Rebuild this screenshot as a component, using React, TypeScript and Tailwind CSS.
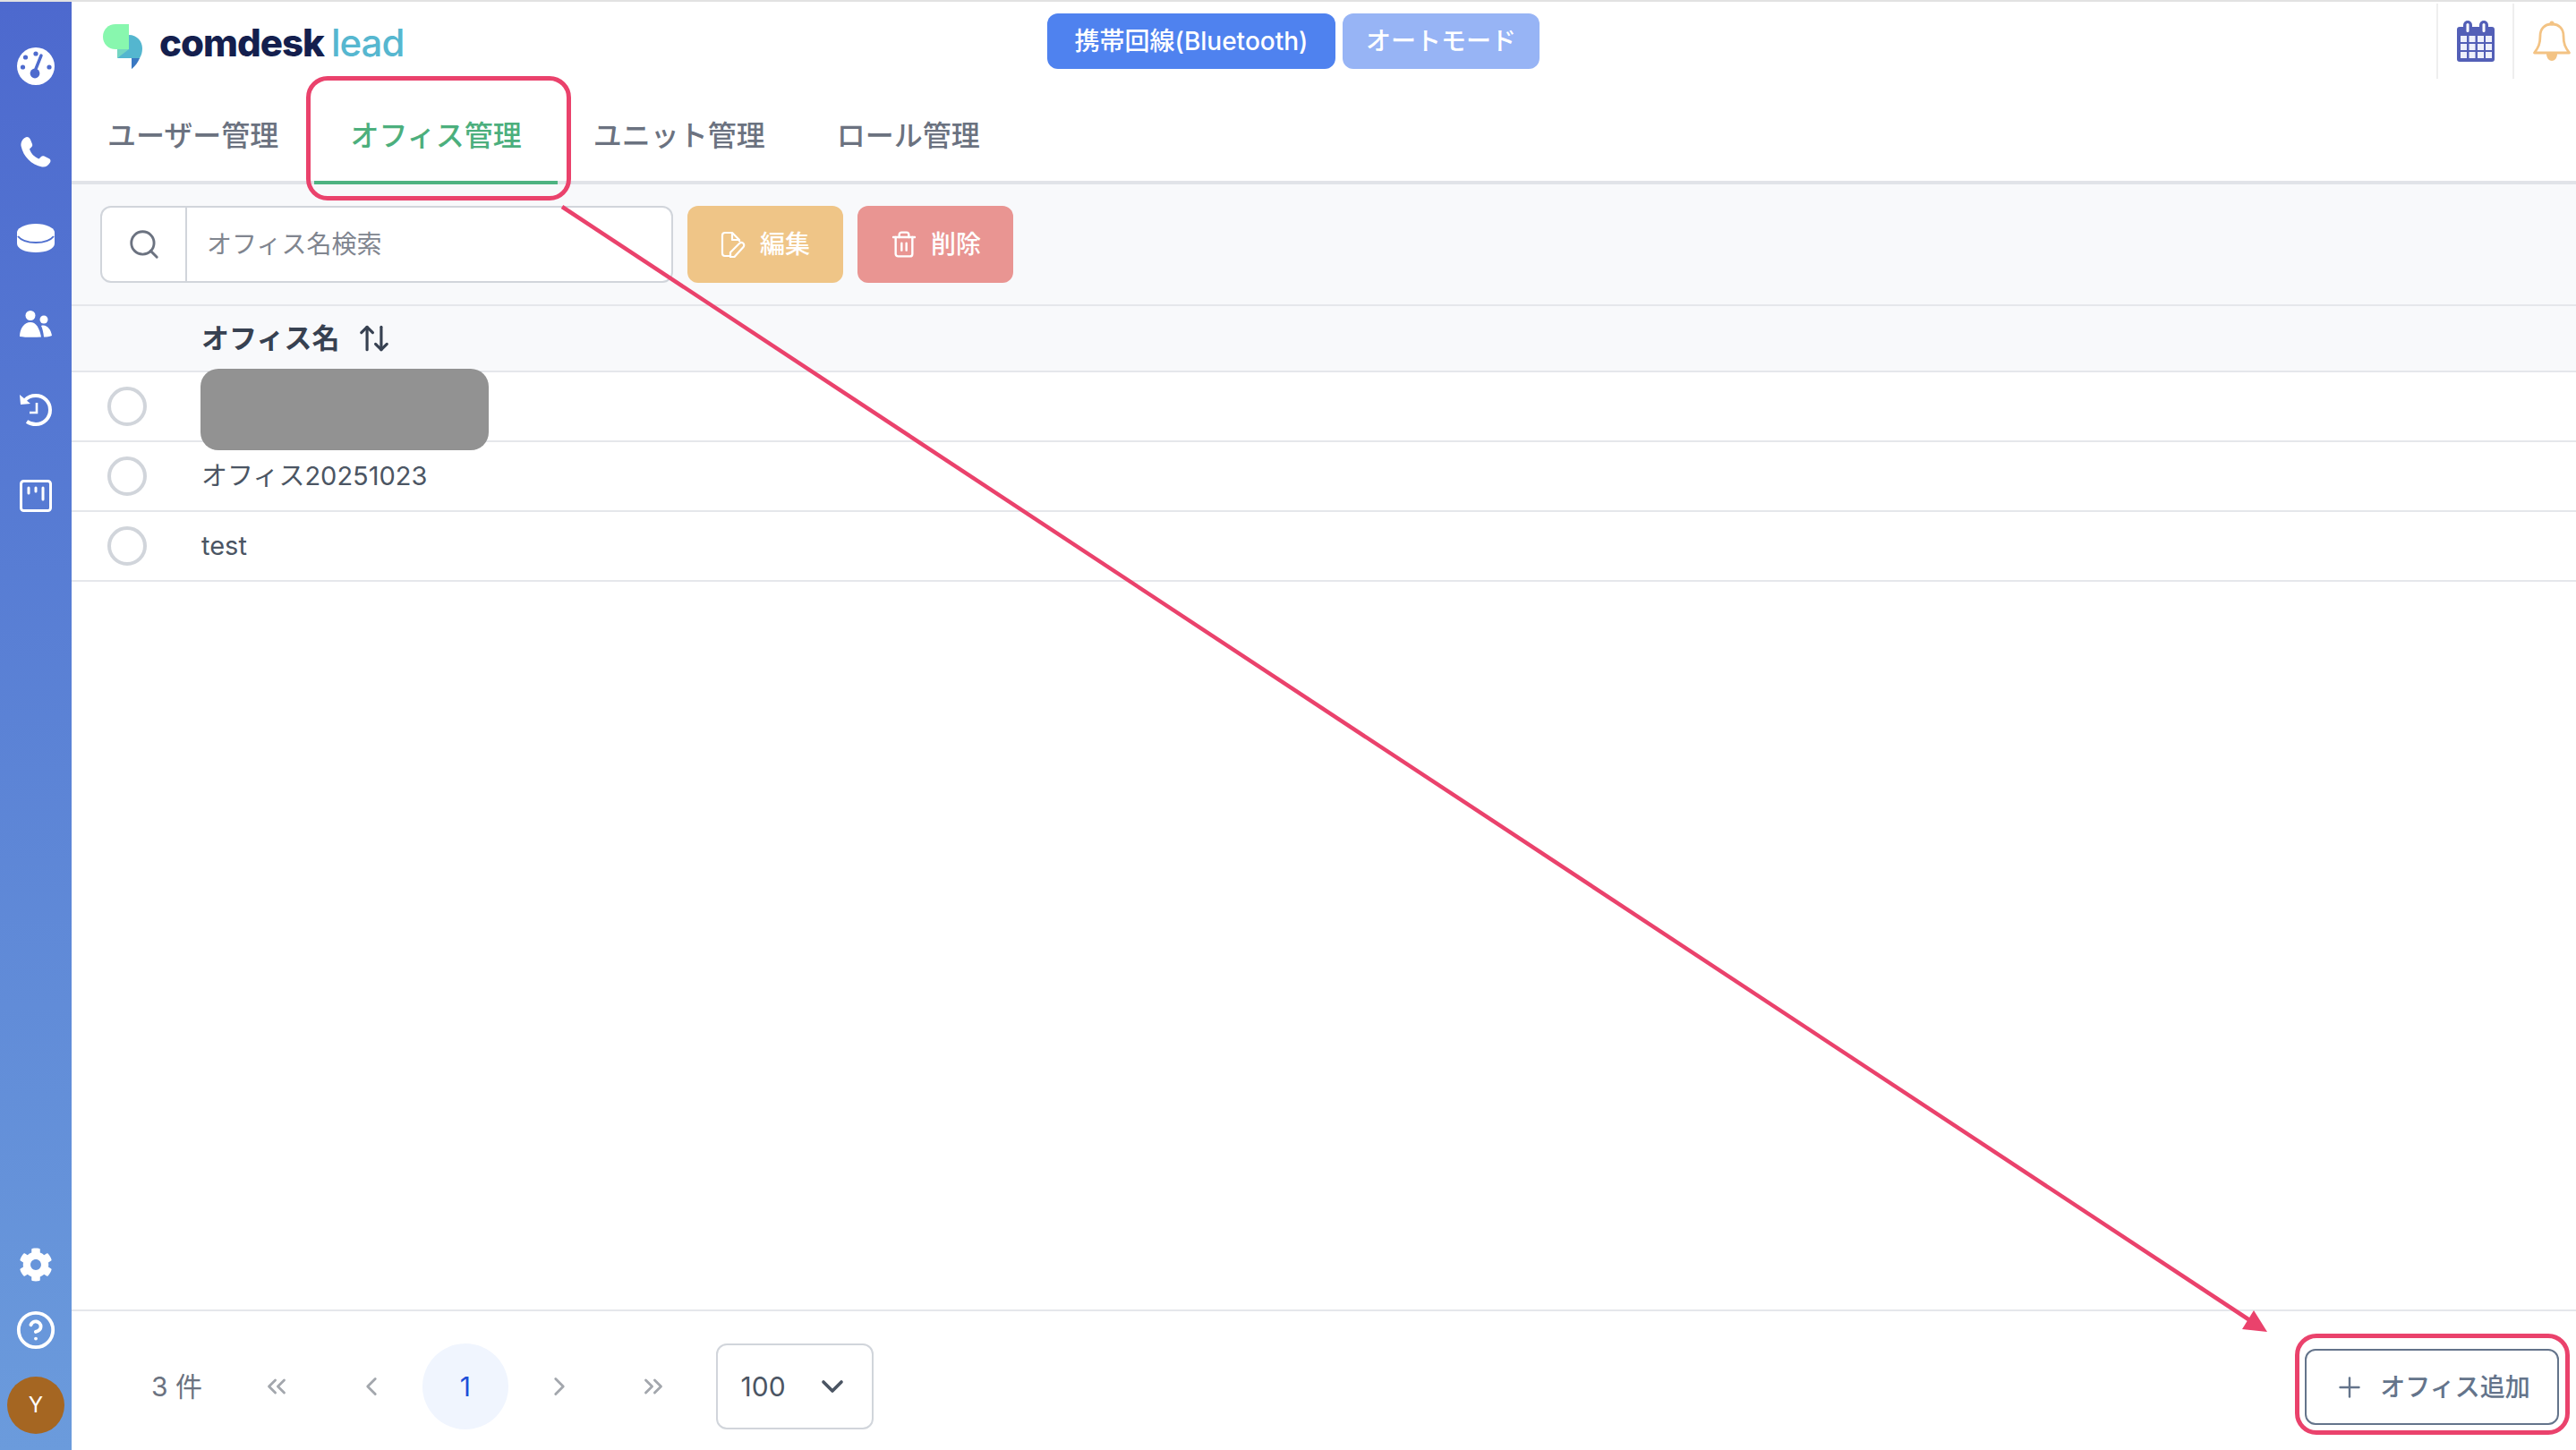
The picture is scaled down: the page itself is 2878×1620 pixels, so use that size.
import { ArrowUpDown, ChevronLeft, ChevronRight, ChevronDown, ChevronsLeft, ChevronsRight, CircleHelp, Plus, Search, Trash2 } from "lucide-react"
import { FaCog } from "react-icons/fa"

const tabs = [
  { label: "ユーザー管理", active: false },
  { label: "オフィス管理", active: true },
  { label: "ユニット管理", active: false },
  { label: "ロール管理", active: false },
]

const rows = ["", "オフィス20251023", "test"]

function Logo() {
  return (
    <svg width="46" height="52" viewBox="0 0 46 52">
      <path d="M29 12C38 12 44 19 44 27C44 31 43 35 41 38L32 50V38H16L29 24Z" fill="#54b6cf" />
      <path d="M16 27H29V24L16 38Z" fill="#74d6c2" />
      <path d="M14 0H29V28H14C6 28 0 22 0 14C0 6 6 0 14 0Z" fill="#88f7ae" />
      <path d="M16 28H29L16 38Z" fill="#74d6c2" />
      <path d="M32 38H41C39 43 36 47 32 50Z" fill="#3a78c2" />
    </svg>
  )
}

function GaugeIcon() {
  return (
    <svg width="42" height="42" viewBox="0 0 42 42">
      <circle cx="21" cy="21" r="21" fill="#fff" />
      <circle cx="21" cy="7" r="2.6" fill="#4e6bce" />
      <circle cx="9.5" cy="11" r="2.6" fill="#4e6bce" />
      <circle cx="6.5" cy="22" r="2.6" fill="#4e6bce" />
      <circle cx="36" cy="22" r="2.6" fill="#4e6bce" />
      <path d="M27 9L21 24" stroke="#4e6bce" strokeWidth="3.4" strokeLinecap="round" />
      <circle cx="20" cy="29" r="5.4" fill="#4e6bce" />
    </svg>
  )
}

function PhoneIcon() {
  return (
    <svg width="34" height="34" viewBox="0 0 34 34">
      <path
        d="M7 0C9 0 10 1 11 3L13 8C13.500 9.500 13 10.500 12 11.500L10 13.500C12 19 15 22 20.500 24.500L23 22C24 21 25 21 26.500 21.500L31.500 24C33.500 25 34 26.500 33 28.500C31 32 28 34 24 33.500C12 31 3 22 0.500 10C0 5 3 1 7 0Z"
        fill="#fff"
      />
    </svg>
  )
}

function DiskIcon() {
  return (
    <svg width="42" height="32" viewBox="0 0 42 32">
      <path d="M0 9V22C0 28 9 32 21 32C33 32 42 28 42 22V9Z" fill="#fff" />
      <ellipse cx="21" cy="10" rx="21" ry="10" fill="#fff" stroke="#5070cf" strokeWidth="0" />
      <path d="M1 14C5 19 12 21 21 21C30 21 37 19 41 14" fill="none" stroke="#5070cf" strokeWidth="2" />
    </svg>
  )
}

function UsersIcon() {
  return (
    <svg width="36" height="30" viewBox="0 0 36 30">
      <circle cx="12" cy="5.500" r="5.500" fill="#fff" />
      <circle cx="27" cy="10" r="4.500" fill="#fff" />
      <path d="M0 29C0 20 5 13 12 13C18 13 22 19 24 29.500C16 30 6 30 0 29Z" fill="#fff" />
      <path d="M24 17C30 15 35 21 36 28C33 29.500 30 29.500 27 29.500C26.500 25 25.500 20 24 17Z" fill="#fff" />
    </svg>
  )
}

function HistoryIcon() {
  return (
    <svg width="36" height="36" viewBox="0 0 36 36" fill="none">
      <path d="M6 7C9 3.500 13 2 18 2C27 2 34 9 34 18C34 27 27 34 18 34C14 34 11 33 8 31" stroke="#fff" strokeWidth="4" />
      <path d="M0 1L1 12L12 11Z" fill="#fff" />
      <path d="M19 10V21H11" stroke="#fff" strokeWidth="2.600" />
    </svg>
  )
}

function BoardIcon() {
  return (
    <svg width="36" height="36" viewBox="0 0 36 36" fill="none">
      <rect x="1.500" y="1.500" width="33" height="33" rx="3" stroke="#fff" strokeWidth="3" />
      <path d="M10 9V15M18 9V13M26 9V22" stroke="#fff" strokeWidth="3" strokeLinecap="round" />
    </svg>
  )
}

function CalendarIcon() {
  return (
    <svg width="42" height="46" viewBox="0 0 42 46">
      <rect x="0" y="7" width="42" height="39" rx="3" fill="#535fb7" />
      <rect x="7" y="0" width="10" height="16" rx="5" fill="#535fb7" />
      <rect x="25" y="0" width="10" height="16" rx="5" fill="#535fb7" />
      <rect x="10.500" y="3" width="3" height="10" rx="1.500" fill="#fff" />
      <rect x="28.500" y="3" width="3" height="10" rx="1.500" fill="#fff" />
      {[17, 26, 35].map((y) =>
        [4, 13.500, 23, 32].map((x) => (
          <rect key={`${x}-${y}`} x={x} y={y} width="7" height="7" fill="#eef0fb" />
        ))
      )}
    </svg>
  )
}

function BellIcon() {
  return (
    <svg width="42" height="46" viewBox="0 0 42 46" fill="none">
      <path
        d="M21 4C12 4 8 10 8 17C8 26 6 30 1.500 36H40.500C36 30 34 26 34 17C34 10 30 4 21 4Z"
        stroke="#f3c384"
        strokeWidth="2.800"
        strokeLinejoin="round"
      />
      <circle cx="21" cy="3" r="2.500" fill="#f3c384" />
      <path d="M15 37C15 42 18 45 21 45C24 45 27 42 27 37Z" fill="#f3c384" />
    </svg>
  )
}

function EditIcon() {
  return (
    <svg width="28" height="30" viewBox="0 0 28 30" fill="none" stroke="#fff" strokeWidth="2.200" strokeLinejoin="round">
      <path d="M11 28H5C3 28 2 27 2 25V5C2 3 3 2 5 2H13L21 10V12" />
      <path d="M13 2V10H21" />
      <path d="M11 29V24L21 14C22.500 12.500 24.500 12.500 25.500 14C26.500 15 26.500 17 25.500 18L15.500 29Z" />
    </svg>
  )
}

export default function App() {
  return (
    <div className="relative flex h-[1620px] w-[2878px] flex-col overflow-hidden bg-white font-[Inter,'Noto_Sans_CJK_JP',sans-serif]">
      <div className="h-[2px] bg-[#e2e2e2]" />
      <div className="flex min-h-0 flex-1">
        {/* Sidebar */}
        <aside className="flex w-[80px] flex-col items-center bg-gradient-to-b from-[#4d69ce] to-[#6b9bdc] pt-[24px] pb-[18px]">
          <div className="flex h-[96px] items-center justify-center"><GaugeIcon /></div>
          <div className="flex h-[96px] items-center justify-center"><PhoneIcon /></div>
          <div className="flex h-[96px] items-center justify-center"><DiskIcon /></div>
          <div className="flex h-[96px] items-center justify-center"><UsersIcon /></div>
          <div className="flex h-[96px] items-center justify-center"><HistoryIcon /></div>
          <div className="flex h-[96px] items-center justify-center"><BoardIcon /></div>
          <div className="mt-auto flex flex-col items-center">
            <FaCog className="h-[38px] w-[38px] text-white" />
            <CircleHelp className="mt-[31px] h-[46px] w-[46px] text-white" strokeWidth={2} />
            <div className="mt-[29px] flex h-[64px] w-[64px] items-center justify-center rounded-full bg-[#a56622] text-[24px] text-white">
              Y
            </div>
          </div>
        </aside>

        {/* Main */}
        <main className="flex min-w-0 flex-1 flex-col">
          {/* Header */}
          <header className="flex h-[88px] shrink-0">
            <div className="flex w-[1090px] items-start gap-[17px] pt-[25px] pl-[35px]">
              <Logo />
              <div className="flex h-[42px] items-baseline text-[42px] leading-[42px] tracking-[-1px]">
                <span className="font-extrabold text-[#141f4e]">comdesk</span>
                <span className="ml-[8px] font-medium text-[#56b7d0]">lead</span>
              </div>
            </div>
            <div className="flex gap-[8px] pt-[13px]">
              <button className="flex h-[62px] w-[322px] items-center justify-center rounded-[12px] bg-[#4f82ef] text-[28px] font-medium text-white">
                携帯回線(Bluetooth)
              </button>
              <button className="flex h-[62px] w-[220px] items-center justify-center rounded-[12px] bg-[#97b4f5] text-[28px] font-medium text-white">
                オートモード
              </button>
            </div>
            <div className="ml-auto flex h-[86px] pt-[2px]">
              <div className="flex w-[85px] items-center justify-center border-l-2 border-[#eeeeee]"><CalendarIcon /></div>
              <div className="flex w-[71px] items-center justify-start border-l-2 border-[#eeeeee] pl-[21px]"><BellIcon /></div>
            </div>
          </header>

          {/* Tabs */}
          <nav className="flex h-[116px] shrink-0 border-b-4 border-[#e1e3e8]">
            {tabs.map((tab) => (
              <div
                key={tab.label}
                className={
                  tab.active
                    ? "-mb-[4px] flex h-[116px] items-start border-b-4 border-[#4db381] px-[40px] pt-[38px] text-[32px] font-medium text-[#4caf7d]"
                    : "flex items-start px-[40px] pt-[38px] text-[32px] font-medium text-[#6b7280]"
                }
              >
                {tab.label}
              </div>
            ))}
          </nav>

          {/* Toolbar */}
          <div className="flex h-[136px] shrink-0 items-start gap-[16px] border-b-2 border-[#e5e7eb] bg-[#f8f9fb] pt-[24px] pl-[32px]">
            <div className="flex h-[86px] w-[640px] items-stretch overflow-hidden rounded-[12px] border-2 border-[#d1d5db] bg-white">
              <div className="flex w-[95px] items-center justify-center border-r-2 border-[#d1d5db]">
                <Search className="h-[38px] w-[38px] text-[#6b7280]" strokeWidth={1.8} />
              </div>
              <div className="flex items-center pl-[22px] text-[28px] text-[#80858f]">オフィス名検索</div>
            </div>
            <button className="flex h-[86px] w-[174px] items-center justify-center gap-[16px] rounded-[12px] bg-[#efc587] text-[28px] font-medium text-white">
              <EditIcon />
              編集
            </button>
            <button className="flex h-[86px] w-[174px] items-center justify-center gap-[14px] rounded-[12px] bg-[#e99592] text-[28px] font-medium text-white">
              <Trash2 className="h-[32px] w-[32px]" strokeWidth={1.8} />
              削除
            </button>
          </div>

          {/* Table head */}
          <div className="flex h-[74px] shrink-0 items-center gap-[20px] border-b-2 border-[#e5e7eb] bg-[#f8f9fb] pl-[145px] text-[31px] font-bold text-[#374151]">
            オフィス名
            <ArrowUpDown className="h-[38px] w-[38px]" strokeWidth={2} />
          </div>

          {/* Rows */}
          <div className="relative">
            {rows.map((name, i) => (
              <div key={i} className="flex h-[78px] items-center border-b-2 border-[#e5e7eb]">
                <span className="ml-[40px] h-[44px] w-[44px] shrink-0 rounded-full border-[4px] border-[#d1d5db]" />
                <span className="ml-[61px] text-[29px] text-[#4b5563]">{name}</span>
              </div>
            ))}
            <div className="absolute top-[-4px] left-[144px] h-[91px] w-[322px] rounded-[20px] bg-[#929292]" />
          </div>

          <div className="flex-1" />

          {/* Footer */}
          <footer className="flex h-[157px] shrink-0 items-start gap-[9.250px] border-t-2 border-[#e5e7eb] pt-[36px] pl-[89px]">
            <div className="flex h-[96px] w-[83px] items-center text-[30px] text-[#6b7280]">3 件</div>
            <button className="flex h-[96px] w-[96px] items-center justify-center text-[#a3a7ad]"><ChevronsLeft className="h-[34px] w-[34px]" strokeWidth={2} /></button>
            <button className="flex h-[96px] w-[96px] items-center justify-center text-[#a3a7ad]"><ChevronLeft className="h-[34px] w-[34px]" strokeWidth={2} /></button>
            <button className="flex h-[96px] w-[96px] items-center justify-center rounded-full bg-[#f0f5fe] text-[30px] text-[#1d4ed8]">1</button>
            <button className="flex h-[96px] w-[96px] items-center justify-center text-[#a3a7ad]"><ChevronRight className="h-[34px] w-[34px]" strokeWidth={2} /></button>
            <button className="flex h-[96px] w-[96px] items-center justify-center text-[#a3a7ad]"><ChevronsRight className="h-[34px] w-[34px]" strokeWidth={2} /></button>
            <div className="ml-[12px] flex h-[96px] w-[176px] items-center justify-between rounded-[12px] border-2 border-[#d1d5db] pr-[24px] pl-[26px] text-[30px] text-[#4b5563]">
              100
              <ChevronDown className="h-[40px] w-[40px]" strokeWidth={2.2} />
            </div>
            <button className="mt-[6px] mr-[19px] ml-auto flex h-[85px] w-[284px] items-center justify-center gap-[16px] rounded-[12px] border-2 border-[#64748b] text-[28px] font-medium text-[#64748b]">
              <Plus className="h-[36px] w-[36px]" strokeWidth={1.6} />
              オフィス追加
            </button>
          </footer>
        </main>
      </div>

      {/* Annotations drawn on top of the screenshot */}
      <div className="absolute top-[85px] left-[342px] h-[139px] w-[296px] rounded-[24px] border-[5px] border-[#ea426c]" />
      <div className="absolute top-[1490px] left-[2564px] h-[113px] w-[307px] rounded-[24px] border-[5px] border-[#ea426c]" />
      <svg className="absolute top-0 left-0" width="2878" height="1620">
        <path d="M628 231L2515 1476" stroke="#ea426c" strokeWidth="4.500" />
        <path d="M2533 1488L2505 1485L2518 1464Z" fill="#ea426c" />
      </svg>
    </div>
  )
}
